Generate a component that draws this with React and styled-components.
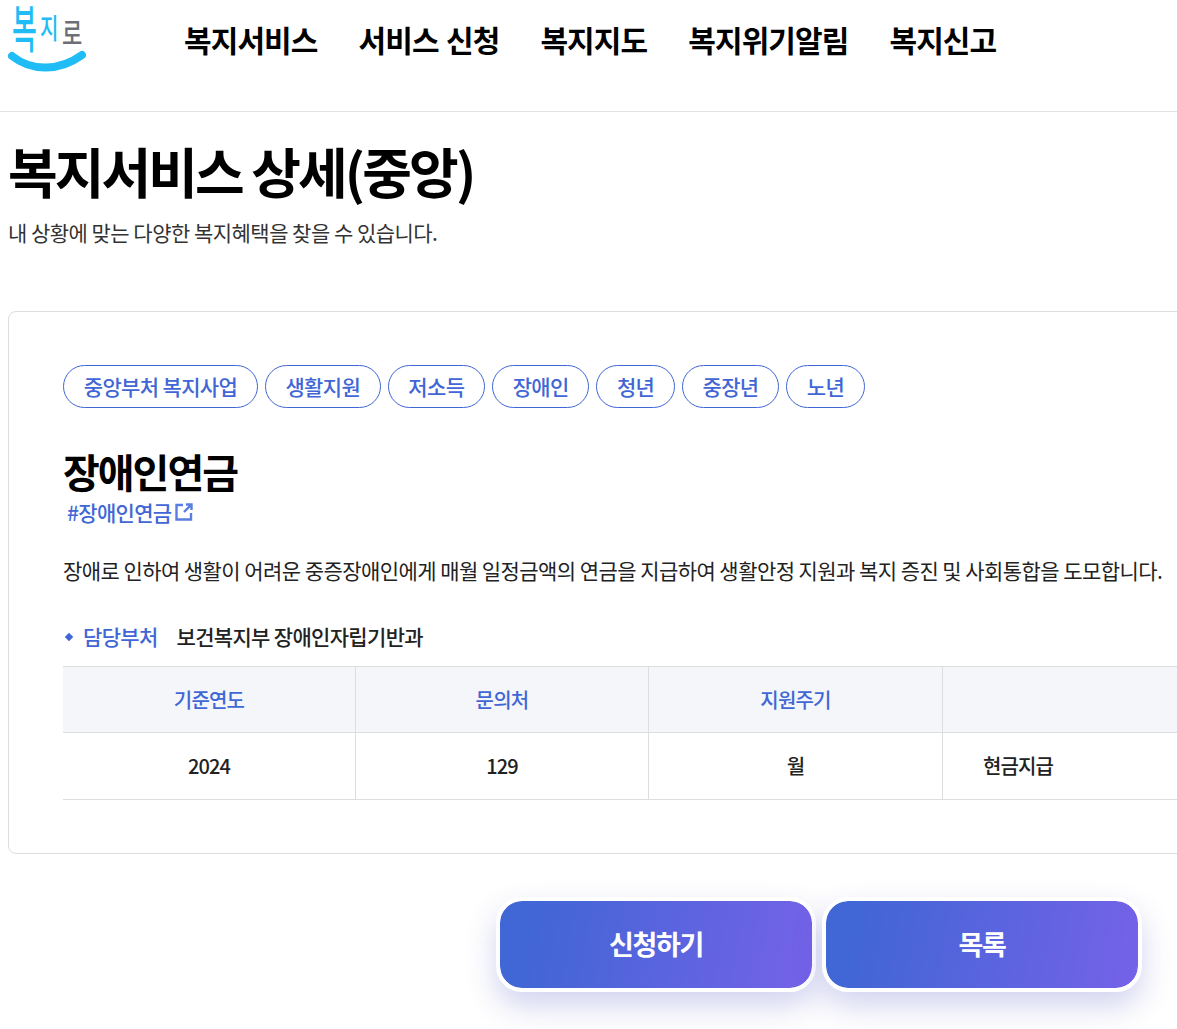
import React from 'react'
import styled, { createGlobalStyle } from 'styled-components'

const navItems = ['복지서비스', '서비스 신청', '복지지도', '복지위기알림', '복지신고']
const tags = ['중앙부처 복지사업', '생활지원', '저소득', '장애인', '청년', '중장년', '노년']

const App = () => {
    return (
        <>
            <GlobalStyle />
            <Header>
                <Logo>
                    <LogoChar $width={28} $size={27} $scale={1.88} $top={1}>복</LogoChar>
                    <LogoChar $width={22} $size={20} $scale={1.42} $top={8}>지</LogoChar>
                    <LogoChar $width={20} $size={22} $scale={1.33} $top={12} $grey>로</LogoChar>
                    <Smile width="78" height="24" viewBox="0 0 78 24">
                        <path d="M4 8 C 24 24, 52 23, 74 7" fill="none" stroke="#1fbcf5" strokeWidth="8" strokeLinecap="round" />
                    </Smile>
                </Logo>
                <Nav>
                    {navItems.map(item => <NavLink key={item}>{item}</NavLink>)}
                </Nav>
            </Header>

            <PageHead>
                <PageTitle>복지서비스 상세(중앙)</PageTitle>
                <PageSub>내 상황에 맞는 다양한 복지혜택을 찾을 수 있습니다.</PageSub>
            </PageHead>

            <Card>
                <TagRow>
                    {tags.map(tag => <Tag key={tag}>{tag}</Tag>)}
                </TagRow>
                <ServiceTitle>장애인연금</ServiceTitle>
                <ServiceLink>
                    #장애인연금
                    <svg width="18" height="18" viewBox="0 0 18 18" fill="none" stroke="#5a7ee0" strokeWidth="2.4">
                        <path d="M8 2 H1.5 V16.5 H16 V10" />
                        <path d="M11 1.5 H16.5 V7 M16 2 L9 9" />
                    </svg>
                </ServiceLink>
                <Description>
                    장애로 인하여 생활이 어려운 중증장애인에게 매월 일정금액의 연금을 지급하여 생활안정 지원과 복지 증진 및 사회통합을 도모합니다.
                </Description>
                <Dept>
                    <DeptLabel>담당부처</DeptLabel>
                    <DeptName>보건복지부 장애인자립기반과</DeptName>
                </Dept>
                <Table>
                    <HeadCell>기준연도</HeadCell>
                    <HeadCell>문의처</HeadCell>
                    <HeadCell>지원주기</HeadCell>
                    <HeadCell $last />
                    <BodyCell>2024</BodyCell>
                    <BodyCell>129</BodyCell>
                    <BodyCell>월</BodyCell>
                    <BodyCell $last>현금지급</BodyCell>
                </Table>
            </Card>

            <Buttons>
                <ActionButton>신청하기</ActionButton>
                <ActionButton>목록</ActionButton>
            </Buttons>
        </>
    )
}

// Styled Components

const GlobalStyle = createGlobalStyle`
    html {
        overflow: hidden;
        background: #fff;
    }
    body {
        margin: 0;
        font-family: "Noto Sans CJK KR", "Noto Sans", sans-serif;
        color: #222;
    }
`

const Header = styled.header`
    height: 111px;
    border-bottom: 1px solid #e2e2e2;
    display: flex;
    align-items: flex-start;
    padding-left: 8px;
`

const Logo = styled.div`
    width: 78px;
    height: 72px;
    margin-right: 98px;
    padding-left: 4px;
    box-sizing: border-box;
    position: relative;
    display: flex;
    align-items: flex-start;
`

const LogoChar = styled.span`
    flex: none;
    width: ${props => props.$width}px;
    margin-top: ${props => props.$top}px;
    font-size: ${props => props.$size}px;
    font-weight: 500;
    line-height: 28px;
    color: ${props => props.$grey ? '#6c6f75' : '#1fbcf5'};
    transform-origin: top left;
    transform: scaleY(${props => props.$scale});
`

const Smile = styled.svg`
    position: absolute;
    left: 0;
    top: 48px;
`

const Nav = styled.nav`
    display: flex;
    gap: 41px;
    padding-top: 18px;
`

const NavLink = styled.a`
    font-size: 30px;
    font-weight: 700;
    line-height: 42px;
    letter-spacing: -0.9px;
    word-spacing: 1.5px;
    color: #000;
    white-space: nowrap;
`

const PageHead = styled.div`
    padding: 23px 8px 0;
`

const PageTitle = styled.h1`
    margin: 0;
    font-size: 54px;
    font-weight: 700;
    line-height: 72px;
    letter-spacing: -2.9px;
    color: #000;
`

const PageSub = styled.p`
    margin: 10px 0 0;
    font-size: 21px;
    line-height: 30px;
    letter-spacing: -0.52px;
    color: #333;
`

const Card = styled.section`
    width: 1300px;
    margin: 64px 0 0 8px;
    padding: 53px 54px 53px;
    box-sizing: border-box;
    border: 1px solid #ddd;
    border-radius: 8px;
`

const TagRow = styled.div`
    display: flex;
    gap: 6.7px;
`

const Tag = styled.span`
    height: 43px;
    box-sizing: border-box;
    padding: 0 19.8px 2px;
    display: flex;
    align-items: center;
    border: 1px solid #4166d5;
    border-radius: 22px;
    font-size: 21px;
    font-weight: 500;
    letter-spacing: -0.66px;
    color: #4166d5;
    white-space: nowrap;
`

const ServiceTitle = styled.h2`
    margin: 36px 0 0;
    font-size: 40px;
    font-weight: 700;
    line-height: 54px;
    letter-spacing: -2px;
    color: #000;
`

const ServiceLink = styled.a`
    display: flex;
    align-items: center;
    gap: 4px;
    margin: 0 0 0 4px;
    font-size: 21px;
    font-weight: 500;
    line-height: 28px;
    letter-spacing: -0.7px;
    color: #4166d5;
`

const Description = styled.p`
    margin: 29px 0 0;
    font-size: 21px;
    line-height: 30px;
    letter-spacing: -0.56px;
    color: #222;
    white-space: nowrap;
`

const Dept = styled.div`
    display: flex;
    gap: 19px;
    margin-top: 36px;
    height: 45px;
    align-items: flex-start;
    font-size: 21px;
    font-weight: 500;
    line-height: 30px;
    letter-spacing: -0.68px;
`

const DeptLabel = styled.span`
    position: relative;
    padding-left: 20px;
    color: #4166d5;
    &::before {
        content: '';
        position: absolute;
        left: 3px;
        top: 13px;
        width: 6px;
        height: 6px;
        background: #4166d5;
        transform: rotate(45deg);
    }
`

const DeptName = styled.span`
    color: #222;
`

const Table = styled.div`
    display: grid;
    grid-template-columns: 293px 293px 294px 1fr;
    border-top: 1px solid #ddd;
`

const HeadCell = styled.div`
    height: 65px;
    display: flex;
    align-items: center;
    justify-content: center;
    background: #f4f6fa;
    border-bottom: 1px solid #ddd;
    border-right: ${props => props.$last ? 'none' : '1px solid #ddd'};
    font-size: 20px;
    font-weight: 500;
    letter-spacing: -0.8px;
    color: #4166d5;
`

const BodyCell = styled.div`
    height: 67px;
    box-sizing: border-box;
    display: flex;
    align-items: center;
    justify-content: ${props => props.$last ? 'flex-start' : 'center'};
    padding: 0 0 2px ${props => props.$last ? '40px' : '0'};
    border-bottom: 1px solid #ddd;
    border-right: ${props => props.$last ? 'none' : '1px solid #ddd'};
    font-size: 20px;
    font-weight: 500;
    letter-spacing: -0.9px;
    color: #222;
`

const Buttons = styled.div`
    display: flex;
    justify-content: flex-end;
    gap: 6px;
    padding: 43px 35px 36px 0;
`

const ActionButton = styled.button`
    width: 320px;
    height: 95px;
    box-sizing: border-box;
    border: 4px solid #fff;
    border-radius: 26px;
    padding: 0 0 3px;
    background: linear-gradient(100deg, #4166d5 10%, #7562e8 100%) padding-box, #fff border-box;
    box-shadow: 0 14px 30px rgba(65, 70, 190, .24);
    font-family: inherit;
    font-size: 27px;
    font-weight: 700;
    letter-spacing: -1.3px;
    color: #fff;
`

export default App
